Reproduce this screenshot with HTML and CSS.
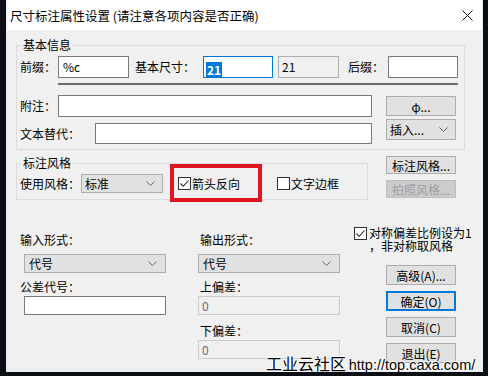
FILE: index.html
```html
<!DOCTYPE html>
<html lang="zh-CN">
<head>
  <meta charset="UTF-8">
  <title>尺寸标注属性设置</title>
  <link rel="stylesheet" href="styles.css">
</head>
<body>
  <div class="window">
    <div class="titlebar">
      <span class="title">尺寸标注属性设置 (请注意各项内容是否正确)</span>
      <svg class="close" width="11" height="11" viewBox="0 0 11 11"><path d="M0.5 0.5L10.5 10.5M10.5 0.5L0.5 10.5" stroke="#111" stroke-width="1"/></svg>
    </div>
    <div class="client">
      <fieldset class="group group-basic">
        <legend>基本信息</legend>
        <div class="row">
          <span class="lbl w-prefix">前缀：</span>
          <div class="edit w-prefix-in">%c</div>
          <span class="lbl w-size">基本尺寸：</span>
          <div class="edit edit-focus w-size-in"><span class="sel">21</span></div>
          <div class="edit edit-ro w-ro">21</div>
          <span class="lbl w-suffix">后缀：</span>
          <div class="edit w-suffix-in"></div>
        </div>
        <div class="sep"></div>
        <div class="row row-note">
          <span class="lbl w-prefix">附注：</span>
          <div class="edit w-note"></div>
          <div class="btn btn-side">φ...</div>
        </div>
        <div class="row row-alt">
          <span class="lbl lbl-alt">文本替代：</span>
          <div class="edit w-alt"></div>
          <div class="combo btn-side">插入...<svg class="chev" width="9" height="5" viewBox="0 0 9 5"><path d="M0.5 0.5L4.5 4.5L8.5 0.5" fill="none" stroke="#666"/></svg></div>
        </div>
      </fieldset>

      <div class="style-row">
        <fieldset class="group group-style">
          <legend>标注风格</legend>
          <div class="row">
            <span class="lbl w-use">使用风格：</span>
            <div class="combo w-style">标准<svg class="chev" width="9" height="5" viewBox="0 0 9 5"><path d="M0.5 0.5L4.5 4.5L8.5 0.5" fill="none" stroke="#666"/></svg></div>
            <span class="check cb-arrow">
              <span class="box"><svg width="11" height="11" viewBox="0 0 11 11"><path d="M1.5 5.5L4.2 8.3L9.5 2.5" fill="none" stroke="#222" stroke-width="1.1"/></svg></span>箭头反向
            </span>
            <span class="check cb-frame"><span class="box"></span>文字边框</span>
          </div>
        </fieldset>
        <div class="side">
          <div class="btn btn-short">标注风格...</div>
          <div class="btn btn-short btn-off">拍照风格...</div>
        </div>
      </div>

      <div class="lower">
        <div class="col col-in">
          <span class="lbl lbl-low">输入形式：</span>
          <div class="combo w-low">代号<svg class="chev" width="9" height="5" viewBox="0 0 9 5"><path d="M0.5 0.5L4.5 4.5L8.5 0.5" fill="none" stroke="#666"/></svg></div>
          <span class="lbl lbl-low">公差代号：</span>
          <div class="edit edit-low w-low"></div>
        </div>
        <div class="col col-out">
          <span class="lbl lbl-low">输出形式：</span>
          <div class="combo w-low">代号<svg class="chev" width="9" height="5" viewBox="0 0 9 5"><path d="M0.5 0.5L4.5 4.5L8.5 0.5" fill="none" stroke="#666"/></svg></div>
          <span class="lbl lbl-low">上偏差：</span>
          <div class="edit edit-low edit-off w-low">0</div>
          <span class="lbl lbl-low lbl-down">下偏差：</span>
          <div class="edit edit-low edit-off w-low">0</div>
        </div>
        <div class="col col-btns">
          <div class="check cb-sym">
            <span class="box"><svg width="11" height="11" viewBox="0 0 11 11"><path d="M1.5 5.5L4.2 8.3L9.5 2.5" fill="none" stroke="#222" stroke-width="1.1"/></svg></span>
            <span class="sym-text">对称偏差比例设为1<br>，非对称取风格</span>
          </div>
          <div class="btn btn-low btn-first">高级(A)...</div>
          <div class="btn btn-low btn-default">确定(O)</div>
          <div class="btn btn-low">取消(C)</div>
          <div class="btn btn-low">退出(E)</div>
        </div>
      </div>
    </div>
    <div class="watermark"><span class="wm-cn">工业云社区</span> <span class="wm-url">http://top.caxa.com/</span></div>
  </div>
</body>
</html>
```

FILE: styles.css
```css
body {
  margin: 0;
  background: #0b0e13;
  font-family: "Noto Sans CJK SC", sans-serif;
  font-size: 12px;
  color: #000;
  overflow: hidden;
}
.window {
  position: relative;
  margin-left: 6px;
  width: 477px;
  height: 372px;
  box-sizing: border-box;
  background: #f0f0f0;
  border: 1px solid #e6ecf2;
  border-top: 0;
}
.titlebar {
  height: 30px;
  background: #fff;
  display: flex;
  align-items: center;
  justify-content: space-between;
  padding: 0 9px 0 3px;
}
.title {
  font-size: 12.5px;
}
.client {
  padding: 8px 0 0 9px;
}
.group {
  margin: 0;
  padding: 0 3px;
  border: 1px solid #dcdcdc;
  min-width: 0;
  box-sizing: border-box;
}
.group legend {
  padding: 0 2px;
  margin-left: 1px;
  line-height: 14px;
}
.group-basic {
  width: 449px;
  padding-top: 4px;
  padding-bottom: 5px;
}
.row {
  display: flex;
  align-items: center;
}
.lbl {
  white-space: nowrap;
  line-height: 16px;
}
.w-prefix { width: 38px; }
.w-size { width: 68px; margin-left: 6px; }
.w-suffix { width: 40px; margin-left: 9px; }
.lbl-alt { width: 75px; }
.w-use { width: 61px; }

.edit {
  height: 22px;
  box-sizing: border-box;
  border: 1px solid #7a7a7a;
  background: #fff;
  padding: 0 4px;
  line-height: 20px;
  white-space: nowrap;
}
.w-prefix-in { width: 71px; }
.w-size-in { width: 70px; }
.w-ro { width: 61px; margin-left: 5px; }
.w-suffix-in { width: 70px; }
.edit-focus {
  border-color: #0078d7;
  padding: 3px 2px 0;
}
.sel {
  display: inline-block;
  background: #0078d7;
  color: #fff;
  font-weight: bold;
  line-height: 15px;
  padding: 0 1px;
}
.edit-ro {
  background: #f0f0f0;
  border-color: #adadad;
  padding-left: 3px;
}
.sep {
  margin: 5px 0 0 38px;
  width: 400px;
  height: 2px;
  background: #6b6b6b;
}
.row-note {
  margin-top: 10px;
}
.w-note { width: 314px; }
.row-alt {
  margin-top: 2px;
  align-items: flex-start;
}
.row-alt .lbl {
  margin-top: 4px;
  line-height: 21px;
}
.w-alt {
  width: 277px;
  height: 21px;
  margin-top: 4px;
}

.btn {
  height: 20px;
  box-sizing: border-box;
  border: 1px solid #adadad;
  background: #e1e1e1;
  display: flex;
  align-items: center;
  justify-content: center;
  white-space: nowrap;
}
.btn-side {
  width: 70px;
  margin-left: 14px;
}
.combo {
  height: 21px;
  box-sizing: border-box;
  border: 1px solid #adadad;
  background: #e1e1e1;
  display: flex;
  align-items: center;
  justify-content: space-between;
  padding: 0 7px 0 3px;
  white-space: nowrap;
}
.chev {
  flex: none;
}

.style-row {
  display: flex;
  margin-top: 6px;
}
.group-style {
  width: 352px;
  padding-top: 4px;
  padding-bottom: 6px;
}
.w-style {
  width: 82px;
  height: 19px;
}
.check {
  display: flex;
  align-items: center;
  white-space: nowrap;
}
.box {
  width: 13px;
  height: 13px;
  box-sizing: border-box;
  border: 1px solid #333;
  background: #fff;
  margin-right: 1px;
  display: flex;
  align-items: center;
  justify-content: center;
}
.cb-arrow {
  position: relative;
  width: 99px;
  height: 19px;
  margin-left: 15px;
}
.cb-arrow::after {
  content: "";
  position: absolute;
  left: -8px;
  top: -10px;
  width: 92px;
  height: 38px;
  box-sizing: border-box;
  border: 4px solid #e0141e;
}
.side {
  margin-left: 18px;
  display: flex;
  flex-direction: column;
  gap: 6px;
}
.btn-short {
  width: 70px;
  height: 18px;
}
.btn-off {
  background: #cccccc;
  border-color: #bfbfbf;
  color: #a0a0a0;
}

.lower {
  display: flex;
  margin-top: 26px;
}
.col {
  display: flex;
  flex-direction: column;
  align-items: flex-start;
}
.col-in {
  width: 182px;
  padding-left: 4px;
  box-sizing: border-box;
}
.col-in .w-low {
  margin-left: 4px;
}
.col-out {
  width: 156px;
}
.col-out .lbl {
  padding-left: 2px;
}
.lbl-low {
  margin-top: 6px;
}
.col .combo {
  margin-top: 6px;
}
.w-low {
  width: 142px;
  height: 19px;
}
.combo.w-low {
  padding-left: 4px;
  padding-right: 8px;
}
.edit-low {
  margin-top: 1px;
  line-height: 17px;
}
.edit-off {
  background: #f0f0f0;
  border-color: #cccccc;
  color: #6d6d6d;
  padding-left: 3px;
}
.lbl-down {
  margin-top: 8px;
}
.col-btns .btn {
  margin-left: 32px;
}
.cb-sym {
  align-items: flex-start;
}
.cb-sym .box {
  margin-top: 1px;
  margin-right: 2px;
}
.sym-text {
  line-height: 13px;
}
.btn-low {
  width: 70px;
  margin-top: 6px;
}
.btn-first {
  margin-top: 13px;
}
.btn-default {
  border: 2px solid #0078d7;
}
.watermark {
  position: absolute;
  left: 259px;
  top: 355px;
  line-height: 16px;
  white-space: nowrap;
  color: #000;
  text-shadow: -1px 0 #fff, 1px 0 #fff, 0 -1px #fff, 0 1px #fff;
}
.wm-cn {
  font-size: 16px;
}
.wm-url {
  font-family: "Liberation Sans", sans-serif;
  font-size: 14.5px;
}
```
